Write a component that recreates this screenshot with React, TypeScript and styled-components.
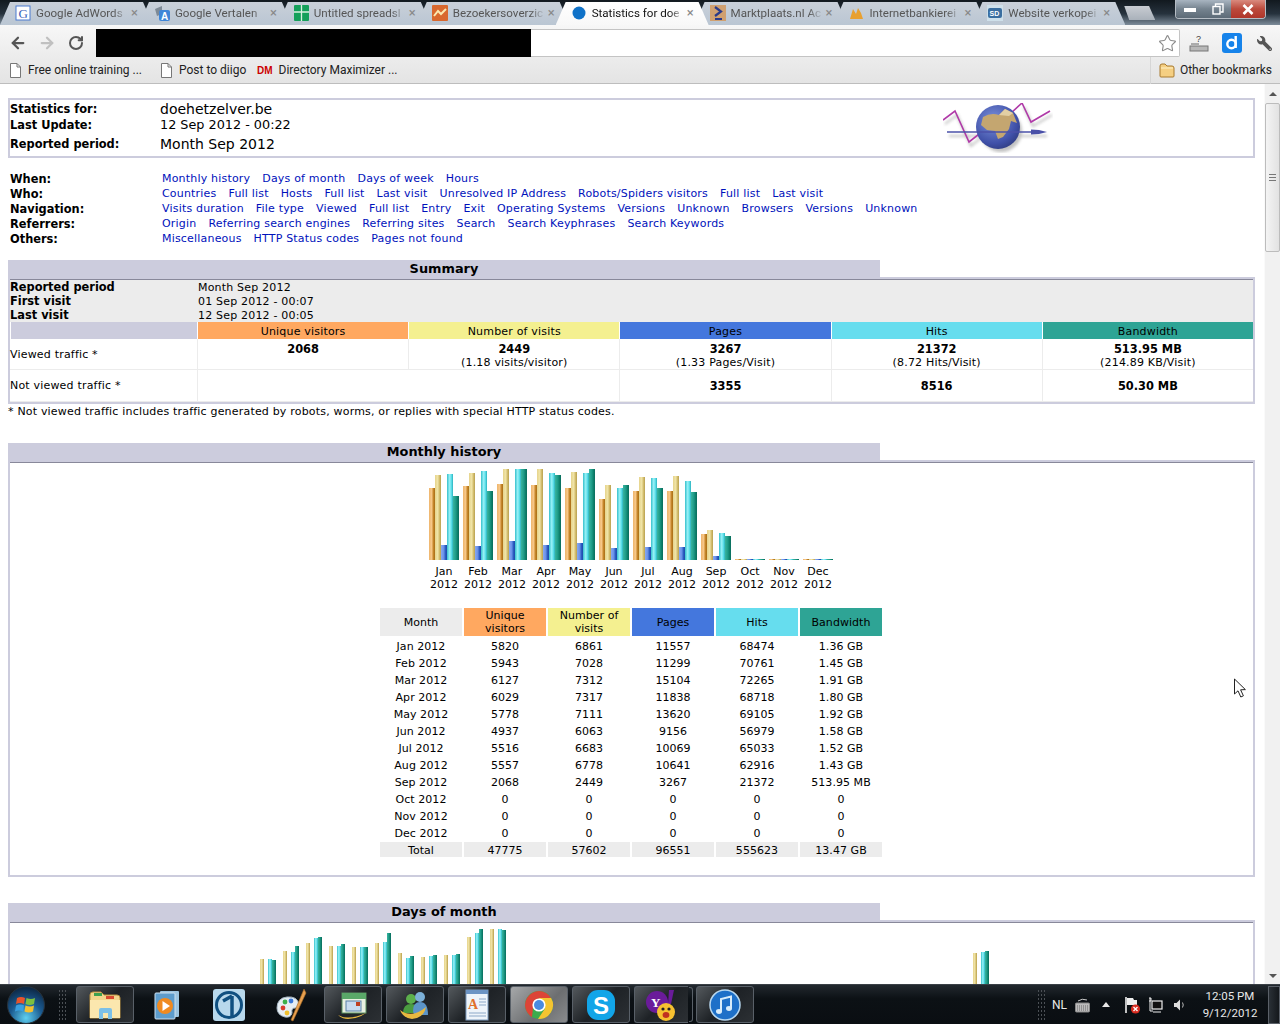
import React from 'react';
import styled, { createGlobalStyle } from 'styled-components';
import { ArrowLeft, ArrowRight, RotateCw, Star } from 'lucide-react';
import { FaWrench } from 'react-icons/fa';

const GlobalStyle = createGlobalStyle`
  html, body { margin: 0; padding: 0; background: #fff; overflow: hidden; }
  body { font-family: "DejaVu Sans", Verdana, sans-serif; font-size: 11px; color: #000; }
`;

const uiFont = `Roboto, "Liberation Sans", sans-serif`;
const colors = { u: '#ffa860', v: '#f4f090', p: '#4477dd', h: '#66ddee', k: '#2ea495' };
const barFills: Record<string, string> = {
  u: 'linear-gradient(90deg,#eeb56c,#f7c88a 45%,#c98a2e 70%,#a86c14)',
  v: 'linear-gradient(90deg,#e6d48c,#f0e4a8 45%,#d2bc6c 75%,#b8a050)',
  p: 'linear-gradient(90deg,#88aaf0,#6a90e8 45%,#2c5cc0 75%,#1c48a8)',
  h: 'linear-gradient(90deg,#36c0cc,#9af2f8 45%,#58dce6 75%,#2cb0bc)',
  k: 'linear-gradient(90deg,#3ab4a0,#1e9c88 45%,#0e806c 75%,#0a6c5c)',
};

const App = styled.div`
  position: relative;
  width: 1280px;
  height: 1024px;
  display: flex;
  flex-direction: column;
  overflow: hidden;
`;

/* browser frame */
const TabStrip = styled.div`
  height: 25px;
  flex: none;
  display: flex;
  background: linear-gradient(180deg, #12191f 0%, #26323d 55%, #7d8c9a 100%);
`;
const Tab = styled.div<{ $active?: boolean }>`
  position: relative;
  z-index: ${(p) => (p.$active ? 2 : 1)};
  flex: none;
  width: 153px;
  height: 23px;
  margin-top: 2px;
  margin-right: -14.1px;
  padding: 0 0 2px 15px;
  box-sizing: border-box;
  display: flex;
  align-items: center;
  clip-path: polygon(0 100%, 10px 0, calc(100% - 10px) 0, 100% 100%);
  background: ${(p) => (p.$active ? 'linear-gradient(180deg,#fff,#f8f8f8)' : 'linear-gradient(180deg,#c9d0d9,#bac6d3)')};
  font: 11.6px ${uiFont};
  color: ${(p) => (p.$active ? '#111' : '#555')};
`;
const TabIcon = styled.svg`
  flex: none;
`;
const TabTitle = styled.span`
  width: 92px;
  margin-left: 5px;
  overflow: hidden;
  white-space: nowrap;
  -webkit-mask-image: linear-gradient(90deg, #000 84%, transparent);
  mask-image: linear-gradient(90deg, #000 84%, transparent);
`;
const TabClose = styled.span`
  margin-left: 3px;
  font-size: 13px;
  color: #888;
`;
const NewTab = styled.div`
  flex: none;
  width: 31px;
  height: 14px;
  margin: 6px 0 0 13px;
  clip-path: polygon(0 0, 80% 0, 100% 100%, 16% 100%);
  background: linear-gradient(180deg, #c8ccd2, #a9b1ba);
`;
const WindowControls = styled.div`
  display: flex;
  height: 18px;
  margin-left: 20px;
  border: 1px solid #b5bcc4;
  border-top: none;
  border-radius: 0 0 4px 4px;
  overflow: hidden;
`;
const WindowButton = styled.div<{ $width: number; $close?: boolean }>`
  width: ${(p) => p.$width}px;
  display: flex;
  align-items: center;
  justify-content: center;
  color: #fff;
  background: ${(p) =>
    p.$close
      ? 'linear-gradient(180deg,#d98a7e,#bb4a3c 50%,#b0362a)'
      : 'linear-gradient(180deg,#a8b4c0,#75838f 50%,#5d6b77)'};
`;
const Toolbar = styled.div`
  height: 32px;
  flex: none;
  display: flex;
  align-items: center;
  padding: 4px 0 0 3px;
  box-sizing: border-box;
  background: linear-gradient(180deg, #f7f7f7, #ececec);
`;
const NavButton = styled.div<{ $color: string }>`
  width: 29px;
  display: flex;
  justify-content: center;
  color: ${(p) => p.$color};
`;
const Omnibox = styled.div`
  width: 1084px;
  height: 28px;
  margin-left: 6px;
  display: flex;
  align-items: center;
  justify-content: space-between;
  padding-right: 2px;
  box-sizing: border-box;
  background: #fff;
  border: 1px solid #c4c4c4;
  border-left: none;
  border-radius: 0 2px 2px 0;
`;
const Redacted = styled.div`
  width: 435px;
  height: 28px;
  background: #000;
`;
const ToolSlot = styled.div<{ $width: number }>`
  width: ${(p) => p.$width}px;
  display: flex;
  justify-content: flex-end;
`;
const Wrench = styled(FaWrench)`
  transform: scaleX(-1);
`;
const Bookmarks = styled.div`
  height: 27px;
  flex: none;
  display: flex;
  align-items: center;
  padding-left: 10px;
  box-sizing: border-box;
  background: linear-gradient(180deg, #ececec, #e4e4e4);
  border-bottom: 1px solid #bdbdbd;
  font: 12px ${uiFont};
  color: #222;
`;
const Bookmark = styled.div<{ $width: number }>`
  width: ${(p) => p.$width}px;
  flex: none;
  display: flex;
  align-items: center;
  gap: 7px;
  white-space: nowrap;
`;
const DmMark = styled.span`
  font: bold 10px "Liberation Sans", sans-serif;
  color: #c00;
  margin-right: -1px;
`;
const OtherBookmarks = styled.div`
  margin-left: auto;
  height: 27px;
  display: flex;
  align-items: center;
  gap: 5px;
  padding: 0 8px 0 8px;
  border-left: 1px solid #d6d6d6;
`;

/* awstats page */
const Content = styled.div`
  flex: 1;
  min-height: 0;
  display: flex;
`;
const Page = styled.div`
  flex: 1;
  min-width: 0;
  overflow: hidden;
  padding: 14px 9px 0 8px;
  letter-spacing: 0.19px;
`;
const HeaderBox = styled.div`
  height: 60px;
  box-sizing: border-box;
  display: flex;
  border: 2px solid #ccccdd;
`;
const HeaderGrid = styled.div`
  display: grid;
  grid-template-columns: 150px auto;
  grid-template-rows: 17px 15px 24px;
  align-items: center;
`;
const Label = styled.b`
  font-size: 11.4px;
  letter-spacing: 0;
`;
const HeaderValue = styled.span<{ $size: number }>`
  font-size: ${(p) => p.$size}px;
  letter-spacing: 0;
`;
const Logo = styled.svg`
  margin: 3px 200px 0 auto;
  flex: none;
`;
const NavGrid = styled.div`
  margin: 13px 0 14px 2px;
  display: grid;
  grid-template-columns: 150px auto;
  grid-auto-rows: 15px;
  align-items: center;
`;
const LinkRow = styled.div`
  display: flex;
  gap: 12px;
  padding-left: 2px;
`;
const NavLink = styled.a`
  color: #0011bb;
  text-decoration: none;
  white-space: nowrap;
  cursor: pointer;
`;
const SectionSpacer = styled.div`
  height: 26px;
`;
const SectionTitle = styled.div`
  width: 872px;
  height: 19px;
  line-height: 18px;
  text-align: center;
  font-weight: bold;
  font-size: 12.9px;
  letter-spacing: 0;
  background: #ccccdd;
`;
const SectionBox = styled.div`
  margin-top: -2px;
  border: 2px solid #ccccdd;
  & > div:first-child { border-top: 1px solid #88889a; }
`;
const SummaryGrid = styled.div`
  display: grid;
  grid-template-columns: 187px repeat(5, 1fr);
  grid-template-rows: 42px 17px 31px 32px;
`;
const InfoBlock = styled.div`
  grid-column: 1 / -1;
  background: #ececec;
  display: grid;
  grid-template-columns: 188px auto;
  grid-auto-rows: 14px;
  align-items: center;
`;
const InfoLabel = styled.b`
  font-size: 11.4px;
  letter-spacing: 0;
`;
const ColorCell = styled.div<{ $color: string }>`
  background: ${(p) => p.$color};
  border-left: 1px solid #fff;
  display: flex;
  align-items: center;
  justify-content: center;
  padding-top: 1px;
`;
const RowLabel = styled.div`
  display: flex;
  align-items: center;
  border-bottom: 1px solid #ececec;
`;
const ValueCell = styled.div<{ $span?: number; $center?: boolean }>`
  grid-column: span ${(p) => p.$span || 1};
  border-left: 1px solid #ececec;
  border-bottom: 1px solid #ececec;
  text-align: center;
  line-height: 13px;
  padding-top: ${(p) => (p.$center ? 10 : 4)}px;
  & b { display: block; font-size: 11.4px; letter-spacing: 0; }
`;
const Footnote = styled.div`
  height: 14px;
  line-height: 16px;
  margin-bottom: 25px;
`;
const HistoryBody = styled.div`
  padding: 5px 1px 16px 0;
`;
const ChartRow = styled.div<{ $right?: number }>`
  display: flex;
  justify-content: center;
  padding-right: ${(p) => p.$right || 0}px;
`;
const BarGroup = styled.div<{ $width: number }>`
  width: ${(p) => p.$width}px;
  height: 92px;
  display: flex;
  align-items: flex-end;
  justify-content: ${(p) => (p.$width === 34 ? 'center' : 'flex-start')};
`;
const Bar = styled.div<{ $kind: string; $width: number }>`
  width: ${(p) => p.$width}px;
  background: ${(p) => barFills[p.$kind]};
`;
const BarGap = styled.div`
  width: 4px;
`;
const AxisRow = styled.div`
  display: flex;
  justify-content: center;
  margin: 5px 0 15px;
  letter-spacing: 0;
`;
const AxisLabel = styled.div`
  width: 34px;
  text-align: center;
  line-height: 13px;
`;
const MonthTable = styled.table`
  margin: 0 auto;
  table-layout: fixed;
  border-collapse: separate;
  border-spacing: 2px;
  font-size: 11px;
  letter-spacing: 0.05px;
  td { width: 82px; padding: 2px 0 0; height: 13px; text-align: center; line-height: 13px; }
`;
const HeadCell = styled.th<{ $color: string }>`
  width: 82px;
  height: 28px;
  padding: 0;
  font-weight: normal;
  line-height: 13px;
  text-align: center;
  background: ${(p) => p.$color};
`;
const TotalRow = styled.tr`
  td { background: #ececec; }
`;

/* scrollbar */
const Scrollbar = styled.div`
  width: 16px;
  flex: none;
  display: flex;
  flex-direction: column;
  align-items: center;
  background: #f1f1f1;
  border-left: 1px solid #fafafa;
  box-sizing: border-box;
`;
const ScrollArrow = styled.div<{ $down?: boolean }>`
  height: ${(p) => (p.$down ? 16 : 19)}px;
  display: flex;
  align-items: center;
  justify-content: center;
  margin-top: ${(p) => (p.$down ? 'auto' : 0)};
  &::before {
    content: '';
    border-left: 4px solid transparent;
    border-right: 4px solid transparent;
    ${(p) => (p.$down ? 'border-top: 4px solid #555;' : 'border-bottom: 4px solid #555;')}
  }
`;
const Thumb = styled.div`
  width: 15px;
  height: 149px;
  box-sizing: border-box;
  display: flex;
  align-items: center;
  justify-content: center;
  border: 1px solid #bcbcbc;
  border-radius: 2px;
  background: linear-gradient(90deg, #f4f4f4, #e2e2e2);
`;
const Grip = styled.div`
  width: 7px;
  height: 7px;
  background: repeating-linear-gradient(180deg, #777 0 1px, transparent 1px 3px);
`;
const Cursor = styled.svg`
  position: absolute;
  left: 1233px;
  top: 678px;
`;

/* taskbar */
const Taskbar = styled.div`
  height: 40px;
  flex: none;
  display: flex;
  align-items: center;
  padding-left: 7px;
  box-sizing: border-box;
  border-top: 1px solid #3a4046;
  background: linear-gradient(180deg, #22282e, #0c1115 35%, #0a0e12);
`;
const Orb = styled.svg`
  flex: none;
`;
const GripDots = styled.div<{ $left: number; $width: number }>`
  flex: none;
  width: ${(p) => p.$width}px;
  height: 32px;
  margin-left: ${(p) => p.$left}px;
  background-image: radial-gradient(#4b5055 0.6px, transparent 0.8px);
  background-size: 3px 4px;
`;
const TaskButton = styled.div<{ $kind?: 'run' | 'active' | 'stack'; $left?: number }>`
  position: relative;
  flex: none;
  width: 58px;
  height: 37px;
  margin-left: ${(p) => p.$left ?? 4}px;
  box-sizing: border-box;
  display: flex;
  align-items: center;
  justify-content: center;
  border-radius: 3px;
  border: ${(p) => (p.$kind ? '1px solid #596068' : '1px solid transparent')};
  background: ${(p) =>
    p.$kind === 'active'
      ? 'linear-gradient(135deg,#a6a8aa,#6c6e70 60%,#8a8c8e)'
      : p.$kind
        ? 'linear-gradient(135deg,#53585c,#1e2226 50%,#2c3034)'
        : 'transparent'};
  ${(p) => (p.$kind === 'stack' ? 'border-right: none; border-radius: 3px 0 0 3px; width: 54px; margin-right: 4px;' : '')}
  ${(p) =>
    p.$kind === 'stack'
      ? `&::after { content: ''; position: absolute; right: -5px; top: 0; bottom: 0; width: 3px; border: 1px solid #596068; border-left: none; border-radius: 0 3px 3px 0; }`
      : ''}
`;
const Tray = styled.div`
  margin-left: auto;
  display: flex;
  align-items: center;
  height: 100%;
  font: 12px ${uiFont};
  color: #e8e8e8;
`;
const Clock = styled.div`
  width: 60px;
  margin-left: 15px;
  text-align: center;
  font-size: 11.5px;
  line-height: 17px;
  white-space: nowrap;
`;
const ShowDesktop = styled.div`
  width: 12px;
  height: 38px;
  margin-left: 8px;
  box-sizing: border-box;
  border: 1px solid #5a6068;
  background: linear-gradient(90deg, #2a3036, #14181c);
`;
const TraySlot = styled.div<{ $left: number }>`
  margin-left: ${(p) => p.$left}px;
  display: flex;
`;

const Favicon: React.FC<{ name: string }> = ({ name }) => {
  const icons: Record<string, React.ReactNode> = {
    g: (
      <>
        <rect x="1" y="1" width="14" height="14" fill="#fff" stroke="#4a7bd0" />
        <text x="3.5" y="13" fontSize="13" fontFamily="Liberation Serif" fill="#3a62b8">G</text>
      </>
    ),
    t: (
      <>
        <path d="M1 4 L8 1 L8 9 L3 11z" fill="#7e8a96" />
        <rect x="5" y="5" width="11" height="11" rx="2" fill="#3f86d8" />
        <text x="7" y="14.5" fontSize="10" fontWeight="bold" fontFamily="Liberation Sans" fill="#fff">A</text>
      </>
    ),
    s: (
      <>
        <rect x="1" y="0" width="15" height="16" rx="1" fill="#14a05a" />
        <path d="M8.5 0v16M1 7h15" stroke="#d8f0e0" strokeWidth="1.3" />
      </>
    ),
    a: (
      <>
        <rect x="0" y="0" width="16" height="16" rx="1" fill="#d9682e" />
        <path d="M2 11 L6 6 L9 9 L14 4" fill="none" stroke="#fbe8b0" strokeWidth="2" />
      </>
    ),
    dot: <circle cx="8" cy="8" r="6.5" fill="#0f72c8" />,
    m: (
      <>
        <rect x="0" y="0" width="16" height="16" fill="#d0a070" />
        <path d="M5 2 L11 6.5 L5 11" fill="none" stroke="#2a3a8a" strokeWidth="2.2" />
        <path d="M5 14h7" stroke="#2a3a8a" strokeWidth="2" />
      </>
    ),
    b: <path d="M2 14 L5 4 L8 9 L10 3 L13 8 L15 14z" fill="#e8a030" />,
    sd: (
      <>
        <rect x="0" y="0" width="16" height="16" fill="#cfe0ea" />
        <rect x="1" y="3" width="14" height="10" rx="2" fill="#3a6ea0" />
        <text x="2.5" y="11" fontSize="7" fontWeight="bold" fontFamily="Liberation Sans" fill="#fff">SD</text>
      </>
    ),
  };
  return (
    <TabIcon width="16" height="16" viewBox="0 0 16 16">
      {icons[name]}
    </TabIcon>
  );
};

const PageIcon = () => (
  <svg width="11" height="15" viewBox="0 0 11 15">
    <path d="M.5.5h6.5l3.5 3.5v10.5h-10z" fill="#fff" stroke="#777" />
    <path d="M7 .5v3.5h3.5" fill="none" stroke="#777" />
  </svg>
);

const FolderIcon = () => (
  <svg width="16" height="15" viewBox="0 0 16 15">
    <path d="M1 3 Q1 1 3 1h3l2 2h5q2 0 2 2v8q0 1-1 1H2q-1 0-1-1z" fill="#f5cf82" stroke="#a87a30" />
    <path d="M2 5h12" stroke="#fff2c8" />
  </svg>
);

const GlobeLogo = () => (
  <Logo width="110" height="50" viewBox="0 0 110 50">
    <defs>
      <radialGradient id="sea" cx="40%" cy="35%" r="75%">
        <stop offset="0%" stopColor="#7d93dc" />
        <stop offset="70%" stopColor="#3f50a8" />
        <stop offset="100%" stopColor="#2c3878" />
      </radialGradient>
      <filter id="soft"><feGaussianBlur stdDeviation="1.5" /></filter>
    </defs>
    <g filter="url(#soft)" opacity="0.45" fill="none" stroke="#777" strokeWidth="2">
      <path d="M2 21 L14 12 L28 43 L39 34 M81 4 L90 23 L109 12" />
      <path d="M6 33 H104" />
      <circle cx="58" cy="28" r="21" fill="#777" stroke="none" />
    </g>
    <path d="M0 17 L12 8 L26 39 L40 28 M68 10 L79 0 L88 19 L107 8" fill="none" stroke="#b03aa8" strokeWidth="1.6" />
    <circle cx="55" cy="24" r="22" fill="url(#sea)" />
    <path d="M40 14 Q48 9 56 12 L62 6 L70 10 L74 20 L68 18 L66 26 L60 34 L55 36 L52 28 L44 27 L38 22z" fill="#c4a670" />
    <path d="M56 12 L62 6 L70 10 L66 13z" fill="#e2cfa4" />
    <path d="M4 29 H88" stroke="#4a50a8" strokeWidth="1.4" />
    <path d="M88 26.5 L96 27 L104 29 L96 31 L88 31.5z" fill="#4a50a8" />
  </Logo>
);

// titles as far as the tab strip shows them
const tabs = [
  ['g', 'Google AdWords'],
  ['t', 'Google Vertalen'],
  ['s', 'Untitled spreadsl'],
  ['a', 'Bezoekersoverzic'],
  ['dot', 'Statistics for doe'],
  ['m', 'Marktplaats.nl Ac'],
  ['b', 'Internetbankierei'],
  ['sd', 'Website verkopei'],
];

const navRows: [string, string[]][] = [
  ['When:', ['Monthly history', 'Days of month', 'Days of week', 'Hours']],
  ['Who:', ['Countries', 'Full list', 'Hosts', 'Full list', 'Last visit', 'Unresolved IP Address', 'Robots/Spiders visitors', 'Full list', 'Last visit']],
  ['Navigation:', ['Visits duration', 'File type', 'Viewed', 'Full list', 'Entry', 'Exit', 'Operating Systems', 'Versions', 'Unknown', 'Browsers', 'Versions', 'Unknown']],
  ['Referrers:', ['Origin', 'Referring search engines', 'Referring sites', 'Search', 'Search Keyphrases', 'Search Keywords']],
  ['Others:', ['Miscellaneous', 'HTTP Status codes', 'Pages not found']],
];

const summaryHead: [string, string][] = [
  ['Unique visitors', colors.u],
  ['Number of visits', colors.v],
  ['Pages', colors.p],
  ['Hits', colors.h],
  ['Bandwidth', colors.k],
];

const months: [string, number, number, number, number, number, string][] = [
  ['Jan', 5820, 6861, 11557, 68474, 1.36, '1.36 GB'],
  ['Feb', 5943, 7028, 11299, 70761, 1.45, '1.45 GB'],
  ['Mar', 6127, 7312, 15104, 72265, 1.91, '1.91 GB'],
  ['Apr', 6029, 7317, 11838, 68718, 1.8, '1.80 GB'],
  ['May', 5778, 7111, 13620, 69105, 1.92, '1.92 GB'],
  ['Jun', 4937, 6063, 9156, 56979, 1.58, '1.58 GB'],
  ['Jul', 5516, 6683, 10069, 65033, 1.52, '1.52 GB'],
  ['Aug', 5557, 6778, 10641, 62916, 1.43, '1.43 GB'],
  ['Sep', 2068, 2449, 3267, 21372, 0.502, '513.95 MB'],
  ['Oct', 0, 0, 0, 0, 0, '0'],
  ['Nov', 0, 0, 0, 0, 0, '0'],
  ['Dec', 0, 0, 0, 0, 0, '0'],
];

// top edges of the visible day bars, measured from the chart baseline
const dayBars: [number, number, number][] = [
  [61, 61, 60], [69, 68, 74], [77, 82, 83], [74, 74, 76], [73, 73, 73], [77, 78, 87],
  [67, 62, 64], [63, 64, 65], [65, 65, 66], [83, 87, 91], [91, 91, 90],
  ...Array.from({ length: 20 }, () => [1, 1, 1] as [number, number, number]),
  [67, 68, 69],
];

const barH = (value: number, max: number) => Math.max(1, Math.round((value / max) * 91));

const App_: React.FC = () => (
  <App>
    <GlobalStyle />
    <TabStrip>
      {tabs.map(([icon, title], i) => (
        <Tab key={title} $active={i === 4}>
          <Favicon name={icon} />
          <TabTitle>{title}</TabTitle>
          <TabClose>×</TabClose>
        </Tab>
      ))}
      <NewTab />
      <WindowControls>
        <WindowButton $width={28}>
          <svg width="12" height="5"><rect width="12" height="4" y="1" fill="#fff" /></svg>
        </WindowButton>
        <WindowButton $width={27}>
          <svg width="12" height="12" viewBox="0 0 12 12" fill="none" stroke="#fff" strokeWidth="1.4">
            <rect x="1" y="3.5" width="7" height="7.5" />
            <path d="M3.5 3V1h7.5v8H8.5" />
          </svg>
        </WindowButton>
        <WindowButton $width={34} $close>
          <svg width="12" height="11" viewBox="0 0 12 11" stroke="#fff" strokeWidth="2.6">
            <path d="M1.5 1l9 9M10.5 1l-9 9" />
          </svg>
        </WindowButton>
      </WindowControls>
    </TabStrip>

    <Toolbar>
      <NavButton $color="#555"><ArrowLeft size={18} strokeWidth={3} /></NavButton>
      <NavButton $color="#c0c0c0"><ArrowRight size={18} strokeWidth={3} /></NavButton>
      <NavButton $color="#555"><RotateCw size={16} strokeWidth={3} /></NavButton>
      <Omnibox>
        <Redacted />
        <Star size={19} color="#8a8a8a" strokeWidth={1.4} fill="#fff" />
      </Omnibox>
      <ToolSlot $width={29}>
        <svg width="20" height="20" viewBox="0 0 20 20">
          <text x="7" y="9" fontSize="9" fontFamily="Liberation Sans" fill="#444">?</text>
          <path d="M2 11h8" stroke="#666" />
          <rect x="1" y="13" width="18" height="5" fill="#b8b8b8" stroke="#777" />
        </svg>
      </ToolSlot>
      <ToolSlot $width={33}>
        <svg width="20" height="20" viewBox="0 0 20 20">
          <rect width="20" height="20" rx="3" fill="#1683ea" />
          <circle cx="9.5" cy="11" r="4.2" fill="none" stroke="#fff" strokeWidth="2.4" />
          <path d="M13.7 3v12" stroke="#fff" strokeWidth="2.4" />
        </svg>
      </ToolSlot>
      <ToolSlot $width={30}>
        <Wrench size={15} color="#555" />
      </ToolSlot>
    </Toolbar>

    <Bookmarks>
      <Bookmark $width={151}><PageIcon />Free online training ...</Bookmark>
      <Bookmark $width={96}><PageIcon />Post to diigo</Bookmark>
      <Bookmark $width={140}><DmMark>DM</DmMark>Directory Maximizer ...</Bookmark>
      <OtherBookmarks><FolderIcon />Other bookmarks</OtherBookmarks>
    </Bookmarks>

    <Content>
      <Page>
        <HeaderBox>
          <HeaderGrid>
            <Label>Statistics for:</Label>
            <HeaderValue $size={14}>doehetzelver.be</HeaderValue>
            <Label>Last Update:</Label>
            <HeaderValue $size={12.8}>12 Sep 2012 - 00:22</HeaderValue>
            <Label>Reported period:</Label>
            <HeaderValue $size={14}>Month Sep 2012</HeaderValue>
          </HeaderGrid>
          <GlobeLogo />
        </HeaderBox>

        <NavGrid>
          {navRows.map(([label, links]) => (
            <React.Fragment key={label}>
              <Label>{label}</Label>
              <LinkRow>
                {links.map((l, i) => (
                  <NavLink key={i}>{l}</NavLink>
                ))}
              </LinkRow>
            </React.Fragment>
          ))}
        </NavGrid>

        <SectionTitle>Summary</SectionTitle>
        <SectionBox>
          <SummaryGrid>
            <InfoBlock>
              <InfoLabel>Reported period</InfoLabel><span>Month Sep 2012</span>
              <InfoLabel>First visit</InfoLabel><span>01 Sep 2012 - 00:07</span>
              <InfoLabel>Last visit</InfoLabel><span>12 Sep 2012 - 00:05</span>
            </InfoBlock>
            <ColorCell $color="#ccccdd" />
            {summaryHead.map(([t, c]) => (
              <ColorCell key={t} $color={c}>{t}</ColorCell>
            ))}
            <RowLabel>Viewed traffic *</RowLabel>
            <ValueCell><b>2068</b></ValueCell>
            <ValueCell><b>2449</b>(1.18 visits/visitor)</ValueCell>
            <ValueCell><b>3267</b>(1.33 Pages/Visit)</ValueCell>
            <ValueCell><b>21372</b>(8.72 Hits/Visit)</ValueCell>
            <ValueCell><b>513.95 MB</b>(214.89 KB/Visit)</ValueCell>
            <RowLabel>Not viewed traffic *</RowLabel>
            <ValueCell $span={2} />
            <ValueCell $center><b>3355</b></ValueCell>
            <ValueCell $center><b>8516</b></ValueCell>
            <ValueCell $center><b>50.30 MB</b></ValueCell>
          </SummaryGrid>
        </SectionBox>
        <Footnote>* Not viewed traffic includes traffic generated by robots, worms, or replies with special HTTP status codes.</Footnote>

        <SectionTitle>Monthly history</SectionTitle>
        <SectionBox>
          <HistoryBody>
            <ChartRow>
              {months.map(([m, u, v, p, h, k]) => (
                <BarGroup key={m} $width={34}>
                  <Bar $kind="u" $width={6} style={{ height: barH(u, 7317) }} />
                  <Bar $kind="v" $width={6} style={{ height: barH(v, 7317) }} />
                  <Bar $kind="p" $width={6} style={{ height: barH(p, 72265) }} />
                  <Bar $kind="h" $width={6} style={{ height: barH(h, 72265) }} />
                  <Bar $kind="k" $width={6} style={{ height: barH(k, 1.92) }} />
                </BarGroup>
              ))}
            </ChartRow>
            <AxisRow>
              {months.map(([m]) => (
                <AxisLabel key={m}>{m}<br />2012</AxisLabel>
              ))}
            </AxisRow>
            <MonthTable>
              <thead>
                <tr>
                  <HeadCell $color="#ececec">Month</HeadCell>
                  <HeadCell $color={colors.u}>Unique<br />visitors</HeadCell>
                  <HeadCell $color={colors.v}>Number of<br />visits</HeadCell>
                  <HeadCell $color={colors.p}>Pages</HeadCell>
                  <HeadCell $color={colors.h}>Hits</HeadCell>
                  <HeadCell $color={colors.k}>Bandwidth</HeadCell>
                </tr>
              </thead>
              <tbody>
                {months.map(([m, u, v, p, h, , k]) => (
                  <tr key={m}>
                    <td>{m} 2012</td><td>{u}</td><td>{v}</td><td>{p}</td><td>{h}</td><td>{k}</td>
                  </tr>
                ))}
                <TotalRow>
                  <td>Total</td><td>47775</td><td>57602</td><td>96551</td><td>555623</td><td>13.47 GB</td>
                </TotalRow>
              </tbody>
            </MonthTable>
          </HistoryBody>
        </SectionBox>

        <SectionSpacer />
        <SectionTitle>Days of month</SectionTitle>
        <SectionBox>
          <HistoryBody>
            <ChartRow $right={6}>
              {dayBars.map(([v, h, k], i) => (
                <BarGroup key={i} $width={23}>
                  <Bar $kind="v" $width={4} style={{ height: v }} />
                  <BarGap />
                  <Bar $kind="h" $width={4} style={{ height: h }} />
                  <Bar $kind="k" $width={4} style={{ height: k }} />
                </BarGroup>
              ))}
            </ChartRow>
          </HistoryBody>
        </SectionBox>
      </Page>
      <Scrollbar>
        <ScrollArrow />
        <Thumb><Grip /></Thumb>
        <ScrollArrow $down />
      </Scrollbar>
    </Content>

    <Taskbar>
      <Orb width="38" height="38" viewBox="0 0 38 38">
        <defs>
          <radialGradient id="orb" cx="50%" cy="85%" r="80%">
            <stop offset="0%" stopColor="#5fd0f0" />
            <stop offset="55%" stopColor="#1a5a90" />
            <stop offset="100%" stopColor="#0e2a48" />
          </radialGradient>
        </defs>
        <circle cx="19" cy="19" r="18.5" fill="url(#orb)" stroke="#28323a" />
        <path d="M10 12 Q14 10 18 12 L17 18 Q13 16 9 18z" fill="#e8542c" />
        <path d="M19.5 12 Q24 14 28 12 L27 18 Q23 20 18.5 18z" fill="#7cc040" />
        <path d="M9 19.5 Q13 17.5 17 19.5 L16 25.5 Q12 23.5 8 25.5z" fill="#3aa0e0" />
        <path d="M18.5 19.5 Q23 21.5 27 19.5 L26 25.5 Q22 27.5 17.5 25.5z" fill="#f4c030" />
      </Orb>
      <GripDots $left={13} $width={8} />
      <TaskButton $kind="run" $left={10}>
        <svg width="34" height="32" viewBox="0 0 34 32">
          <path d="M2 6 Q2 3 5 3h8l3 3h13q3 0 3 3v20H2z" fill="#f2d58c" stroke="#b89040" />
          <path d="M2 11h30v18H2z" fill="#fbe7ae" />
          <rect x="6" y="4" width="8" height="3" fill="#3ca050" />
          <rect x="18" y="7" width="8" height="3" fill="#d84a30" />
          <path d="M11 30V21q0-2 2-2h9q2 0 2 2v9h-4v-6h-5v6z" fill="#7cc0e8" />
        </svg>
      </TaskButton>
      <TaskButton>
        <svg width="26" height="30" viewBox="0 0 26 30">
          <rect x="6" y="1" width="19" height="26" rx="1" fill="#9cc4e0" />
          <rect x="1" y="3" width="20" height="26" rx="1" fill="#5d9ccc" stroke="#cde0f0" />
          <circle cx="11" cy="16" r="8" fill="#f08a20" />
          <path d="M8.5 11 L16 16 L8.5 21z" fill="#fff" />
        </svg>
      </TaskButton>
      <TaskButton>
        <svg width="32" height="32" viewBox="0 0 32 32">
          <rect width="32" height="32" rx="3" fill="#b8d8ec" />
          <circle cx="16" cy="16" r="12.5" fill="none" stroke="#0f4f80" strokeWidth="3" />
          <path d="M10 12 L19 7 M19 7 V27" fill="none" stroke="#0f4f80" strokeWidth="3.5" />
        </svg>
      </TaskButton>
      <TaskButton>
        <svg width="32" height="34" viewBox="0 0 32 34">
          <path d="M2 20 Q2 10 12 9 Q22 8 24 16 Q24 20 20 20 Q16 20 17 25 Q16 30 10 29 Q2 27 2 20z" fill="#e6eef4" stroke="#a8b8c4" />
          <circle cx="8" cy="20" r="2.4" fill="#d83c30" />
          <circle cx="10" cy="14" r="2.4" fill="#3cb04c" />
          <circle cx="16" cy="13" r="2.4" fill="#3a78d8" />
          <circle cx="12" cy="25" r="2.4" fill="#f0c030" />
          <path d="M29 1 L31 5 L18 33 L16 32z" fill="#e8a050" stroke="#a86a20" strokeWidth=".6" />
        </svg>
      </TaskButton>
      <TaskButton $kind="run">
        <svg width="34" height="32" viewBox="0 0 34 32">
          <rect x="6" y="4" width="24" height="20" fill="#e8f0e0" stroke="#5a9060" />
          <rect x="6" y="4" width="24" height="6" fill="#5aa868" />
          <rect x="10" y="12" width="15" height="10" fill="#c8dcf0" stroke="#5a80a8" />
          <rect x="20" y="13" width="4" height="4" fill="#c04020" />
          <path d="M2 26 Q12 32 30 24 Q22 30 12 30 Q6 30 2 26z" fill="#e8b840" />
        </svg>
      </TaskButton>
      <TaskButton $kind="run">
        <svg width="34" height="32" viewBox="0 0 34 32">
          <circle cx="13" cy="10" r="5" fill="#5cb04c" />
          <path d="M5 24 Q5 15 13 15 Q21 15 21 24z" fill="#4a9c40" />
          <circle cx="22" cy="8" r="5" fill="#7cb0d8" />
          <path d="M15 22 Q15 13 22 13 Q30 13 30 26H16z" fill="#5c94c8" />
          <path d="M2 21 Q14 30 28 18 Q26 29 14 30 Q5 29 2 21z" fill="#e8b840" />
        </svg>
      </TaskButton>
      <TaskButton $kind="run">
        <svg width="26" height="32" viewBox="0 0 26 32">
          <rect x="2" y="1" width="22" height="30" fill="#eef4fa" stroke="#7c9cc0" />
          <rect x="2" y="1" width="22" height="4" fill="#6c94c4" />
          <text x="4" y="20" fontSize="14" fontFamily="Liberation Serif" fontWeight="bold" fill="#e0702c">A</text>
          <path d="M15 10h7M15 13h7M15 16h7M5 24h17M5 27h17" stroke="#8ca8c8" />
        </svg>
      </TaskButton>
      <TaskButton $kind="active">
        <svg width="30" height="30" viewBox="-15 -15 30 30">
          <circle r="14" fill="#3cab4c" />
          <path d="M-12.1-7 A14 14 0 0 1 12.1-7 L0-7 Z" fill="#dc4437" />
          <path d="M-12.1-7 L0-7 L-6 3.5 L-7 12.1 A14 14 0 0 1-12.1-7z" fill="#dc4437" />
          <path d="M12.1-7 A14 14 0 0 1-1 14 L6 3.5 L0-7z" fill="#f4c430" />
          <circle r="6.6" fill="#fff" />
          <circle r="5" fill="#4a8be0" />
        </svg>
      </TaskButton>
      <TaskButton $kind="run">
        <svg width="30" height="32" viewBox="0 0 30 32">
          <rect x="1" y="1" width="28" height="30" rx="11" fill="#12a5e8" />
          <text x="15" y="25" textAnchor="middle" fontSize="24" fontWeight="bold" fontFamily="Liberation Sans" fill="#fff">S</text>
        </svg>
      </TaskButton>
      <TaskButton $kind="stack">
        <svg width="34" height="34" viewBox="0 0 34 34">
          <ellipse cx="12" cy="14" rx="11" ry="11" fill="#6a1b9a" />
          <text x="6" y="19" fontSize="13" fontWeight="bold" fontFamily="Liberation Serif" fill="#fff">Y</text>
          <path d="M24 2 L29 2 L26 16 L23 16z" fill="#6a1b9a" />
          <circle cx="21" cy="24" r="9" fill="#f6c030" />
          <circle cx="18" cy="21" r="1.6" fill="#222" />
          <circle cx="24" cy="21" r="1.6" fill="#222" />
          <ellipse cx="21" cy="27" rx="3.4" ry="3" fill="#c03020" />
        </svg>
      </TaskButton>
      <TaskButton $kind="run">
        <svg width="32" height="32" viewBox="0 0 32 32">
          <circle cx="16" cy="16" r="15" fill="#1e70c8" stroke="#b8d8f0" strokeWidth="1.5" />
          <path d="M12 22V10l10-2.5V19" fill="none" stroke="#d8ecfa" strokeWidth="2" />
          <ellipse cx="10" cy="22.5" rx="3" ry="2.4" fill="#d8ecfa" />
          <ellipse cx="20" cy="19.5" rx="3" ry="2.4" fill="#d8ecfa" />
        </svg>
      </TaskButton>
      <Tray>
        <GripDots $left={0} $width={8} />
        <TraySlot $left={7}>NL</TraySlot>
        <TraySlot $left={8}>
          <svg width="15" height="16" viewBox="0 0 15 16">
            <path d="M3 4 Q7 1 12 3" fill="none" stroke="#ccc" />
            <rect x=".5" y="6" width="14" height="9" rx="1" fill="#bbb" stroke="#888" />
            <path d="M2 9h11M2 11h11M2 13h11" stroke="#666" strokeDasharray="1 1" />
          </svg>
        </TraySlot>
        <TraySlot $left={12}>
          <svg width="8" height="5"><path d="M0 5 L4 0 L8 5z" fill="#e8e8e8" /></svg>
        </TraySlot>
        <TraySlot $left={15}>
          <svg width="16" height="18" viewBox="0 0 16 18">
            <path d="M1 1v16" stroke="#eee" strokeWidth="1.6" />
            <path d="M2 2h6l1 2h3v5H2z" fill="#eee" />
            <circle cx="10.5" cy="13" r="4.6" fill="#d82c20" />
            <path d="M8.5 11l4 4M12.5 11l-4 4" stroke="#fff" strokeWidth="1.3" />
          </svg>
        </TraySlot>
        <TraySlot $left={7}>
          <svg width="15" height="16" viewBox="0 0 15 16">
            <rect x="4" y="4" width="10" height="8" fill="#111" stroke="#eee" strokeWidth="1.2" />
            <path d="M2 1v5M1 1h2v3H1M5 15h8M2 6v8h3" fill="none" stroke="#eee" />
          </svg>
        </TraySlot>
        <TraySlot $left={11}>
          <svg width="11" height="14" viewBox="0 0 11 14">
            <path d="M0 5h2.5L6 1.5v11L2.5 9H0z" fill="#ddd" />
            <path d="M8.5 4.5q1.5 2.5 0 5" fill="none" stroke="#bbb" />
          </svg>
        </TraySlot>
        <Clock>12:05 PM<br />9/12/2012</Clock>
        <ShowDesktop />
      </Tray>
    </Taskbar>

    <Cursor width="14" height="20" viewBox="0 0 14 20">
      <path d="M1.5 1 V16 L5 12.8 L7.8 19 L10.4 17.8 L7.6 11.8 L12.4 11.6z" fill="#fff" stroke="#222" strokeWidth="1" />
    </Cursor>
  </App>
);

export default App_;
